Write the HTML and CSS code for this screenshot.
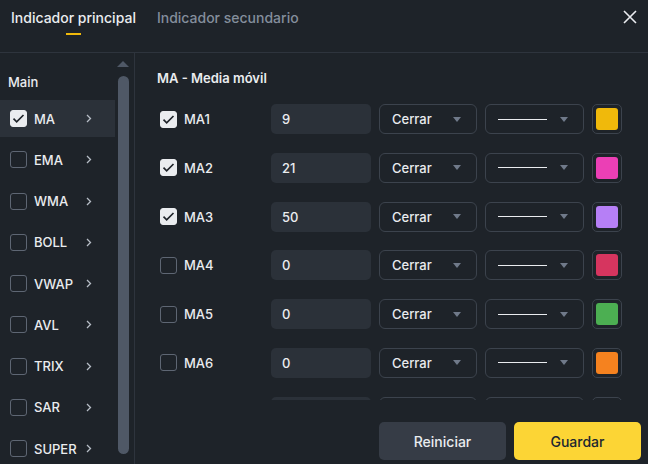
FILE: index.html
```html
<!DOCTYPE html>
<html lang="es">
<head>
<meta charset="utf-8">
<title>Indicadores</title>
<link rel="stylesheet" href="styles.css">
</head>
<body>
<div class="dialog">
  <header class="header">
    <nav class="tabs">
      <div class="tab active"><span>Indicador principal</span><i class="bar"></i></div>
      <div class="tab"><span>Indicador secundario</span><i class="bar"></i></div>
    </nav>
    <svg class="close" width="14" height="14" viewBox="0 0 14 14"><path d="M1 1L13 13M13 1L1 13" stroke="#eaecef" stroke-width="1.6" fill="none"/></svg>
  </header>
  <div class="body">
    <aside class="side">
      <div class="side-title">Main</div>
      <ul class="list">
        <li class="item selected"><span class="cb on"><svg viewBox="0 0 18 18"><path d="M3 9.2l3.8 3.8L15 4.8" stroke="#1e2329" stroke-width="2" fill="none"/></svg></span><span class="name">MA</span><svg class="chev" width="6" height="9" viewBox="0 0 6 9"><path d="M1 1l3.5 3.5L1 8" stroke="#b7bdc6" stroke-width="1.3" fill="none"/></svg></li>
        <li class="item"><span class="cb"></span><span class="name">EMA</span><svg class="chev" width="6" height="9" viewBox="0 0 6 9"><path d="M1 1l3.5 3.5L1 8" stroke="#b7bdc6" stroke-width="1.3" fill="none"/></svg></li>
        <li class="item"><span class="cb"></span><span class="name">WMA</span><svg class="chev" width="6" height="9" viewBox="0 0 6 9"><path d="M1 1l3.5 3.5L1 8" stroke="#b7bdc6" stroke-width="1.3" fill="none"/></svg></li>
        <li class="item"><span class="cb"></span><span class="name">BOLL</span><svg class="chev" width="6" height="9" viewBox="0 0 6 9"><path d="M1 1l3.5 3.5L1 8" stroke="#b7bdc6" stroke-width="1.3" fill="none"/></svg></li>
        <li class="item"><span class="cb"></span><span class="name">VWAP</span><svg class="chev" width="6" height="9" viewBox="0 0 6 9"><path d="M1 1l3.5 3.5L1 8" stroke="#b7bdc6" stroke-width="1.3" fill="none"/></svg></li>
        <li class="item"><span class="cb"></span><span class="name">AVL</span><svg class="chev" width="6" height="9" viewBox="0 0 6 9"><path d="M1 1l3.5 3.5L1 8" stroke="#b7bdc6" stroke-width="1.3" fill="none"/></svg></li>
        <li class="item"><span class="cb"></span><span class="name">TRIX</span><svg class="chev" width="6" height="9" viewBox="0 0 6 9"><path d="M1 1l3.5 3.5L1 8" stroke="#b7bdc6" stroke-width="1.3" fill="none"/></svg></li>
        <li class="item"><span class="cb"></span><span class="name">SAR</span><svg class="chev" width="6" height="9" viewBox="0 0 6 9"><path d="M1 1l3.5 3.5L1 8" stroke="#b7bdc6" stroke-width="1.3" fill="none"/></svg></li>
        <li class="item"><span class="cb"></span><span class="name">SUPER</span><svg class="chev" width="6" height="9" viewBox="0 0 6 9"><path d="M1 1l3.5 3.5L1 8" stroke="#b7bdc6" stroke-width="1.3" fill="none"/></svg></li>
      </ul>
      <div class="scrollbar">
        <svg class="sb-arrow" width="12" height="6" viewBox="0 0 12 6"><path d="M6 0L12 6H0z" fill="#4f5866"/></svg>
        <div class="sb-thumb"></div>
      </div>
    </aside>
    <main class="panel">
      <div class="scroll">
        <div class="panel-title">MA - Media móvil</div>
        <div class="rows">
          <div class="row"><span class="cb on"><svg viewBox="0 0 18 18"><path d="M3 9.2l3.8 3.8L15 4.8" stroke="#1e2329" stroke-width="2" fill="none"/></svg></span><span class="rlabel">MA1</span><div class="input">9</div><div class="select"><span>Cerrar</span><i class="tri"></i></div><div class="select"><i class="line"></i><i class="tri"></i></div><div class="swatch"><i class="c1"></i></div></div>
          <div class="row"><span class="cb on"><svg viewBox="0 0 18 18"><path d="M3 9.2l3.8 3.8L15 4.8" stroke="#1e2329" stroke-width="2" fill="none"/></svg></span><span class="rlabel">MA2</span><div class="input">21</div><div class="select"><span>Cerrar</span><i class="tri"></i></div><div class="select"><i class="line"></i><i class="tri"></i></div><div class="swatch"><i class="c2"></i></div></div>
          <div class="row"><span class="cb on"><svg viewBox="0 0 18 18"><path d="M3 9.2l3.8 3.8L15 4.8" stroke="#1e2329" stroke-width="2" fill="none"/></svg></span><span class="rlabel">MA3</span><div class="input">50</div><div class="select"><span>Cerrar</span><i class="tri"></i></div><div class="select"><i class="line"></i><i class="tri"></i></div><div class="swatch"><i class="c3"></i></div></div>
          <div class="row"><span class="cb"></span><span class="rlabel">MA4</span><div class="input">0</div><div class="select"><span>Cerrar</span><i class="tri"></i></div><div class="select"><i class="line"></i><i class="tri"></i></div><div class="swatch"><i class="c4"></i></div></div>
          <div class="row"><span class="cb"></span><span class="rlabel">MA5</span><div class="input">0</div><div class="select"><span>Cerrar</span><i class="tri"></i></div><div class="select"><i class="line"></i><i class="tri"></i></div><div class="swatch"><i class="c5"></i></div></div>
          <div class="row"><span class="cb"></span><span class="rlabel">MA6</span><div class="input">0</div><div class="select"><span>Cerrar</span><i class="tri"></i></div><div class="select"><i class="line"></i><i class="tri"></i></div><div class="swatch"><i class="c6"></i></div></div>
          <div class="row"><span class="cb"></span><span class="rlabel"></span><div class="input"></div><div class="select"></div><div class="select"></div><div class="swatch"><i class="c7"></i></div></div>
        </div>
      </div>
      <footer class="footer">
        <button class="btn reset">Reiniciar</button>
        <button class="btn save">Guardar</button>
      </footer>
    </main>
  </div>
</div>
</body>
</html>
```

FILE: styles.css
```css
* { box-sizing: border-box; }
html, body { margin: 0; padding: 0; }
body {
  width: 648px;
  height: 464px;
  overflow: hidden;
  background: #1e2329;
  font-family: Inter, "Noto Sans", "Liberation Sans", sans-serif;
  color: #eaecef;
}
.dialog { width: 648px; height: 464px; display: flex; flex-direction: column; }

.header {
  height: 53px;
  flex: none;
  border-bottom: 1px solid #2e343d;
  display: flex;
  align-items: flex-start;
  justify-content: space-between;
  padding: 0 11px 0 11px;
}
.tabs { display: flex; gap: 21px; padding-top: 8px; }
.tab {
  display: flex;
  flex-direction: column;
  align-items: center;
  font-size: 14px;
  font-weight: 500;
  line-height: 20px;
  color: #848e9c;
}
.tab.active { color: #eaecef; }
.tab .bar { display: block; width: 15px; height: 2px; margin-top: 5px; background: transparent; }
.tab.active .bar { background: #f0b90b; }
.close { margin-top: 10px; margin-right: 0; }

.body { flex: 1; display: flex; min-height: 0; }

.side {
  width: 135px;
  flex: none;
  border-right: 1px solid #2e343d;
  position: relative;
  overflow: hidden;
}
.side-title {
  padding: 19px 0 0 8px;
  font-size: 13px;
  font-weight: 500;
  line-height: 20px;
  color: #eaecef;
}
.list { list-style: none; margin: 8px 0 0 0; padding: 0; }
.item {
  width: 115px;
  height: 37px;
  margin-bottom: 4.25px;
  display: flex;
  align-items: center;
  padding-left: 10px;
  font-size: 13px;
  font-weight: 500;
  color: #eaecef;
}
.item.selected { background: #2b3139; }
.item .name { width: 52px; margin-left: 7px; }
.chev { display: block; }

.cb {
  width: 17px;
  height: 17px;
  flex: none;
  border: 1px solid #5e6673;
  border-radius: 3px;
  display: block;
}
.cb.on { background: #eaecef; border-color: #eaecef; }
.cb svg { display: block; width: 15px; height: 15px; }

.scrollbar {
  position: absolute;
  left: 117px;
  top: 8px;
  width: 12px;
  display: flex;
  flex-direction: column;
  align-items: center;
}
.sb-arrow { display: block; }
.sb-thumb {
  margin-top: 9px;
  width: 11px;
  height: 378px;
  border-radius: 6px;
  background: #4f5866;
}

.panel { flex: 1; display: flex; flex-direction: column; min-width: 0; }
.scroll { height: 347px; overflow: hidden; padding: 15px 0 0 22px; flex: none; }
.panel-title { font-size: 13px; font-weight: 600; line-height: 20px; color: #eaecef; }
.rows { margin-top: 16px; display: flex; flex-direction: column; gap: 18.8px; padding-left: 3px; }
.row {
  display: grid;
  grid-template-columns: 17px 78px 100px 98px 99px 30px;
  column-gap: 8px;
  height: 30px;
  align-items: center;
  font-size: 13px;
  font-weight: 500;
}
.rlabel { color: #eaecef; margin-left: -1px; }
.input {
  height: 30px;
  background: #2b3139;
  border-radius: 5px;
  padding-left: 11px;
  line-height: 30px;
  color: #eaecef;
}
.select {
  height: 30px;
  border: 1px solid #3c434d;
  border-radius: 6px;
  display: flex;
  align-items: center;
  justify-content: space-between;
  padding: 0 15px 0 12px;
  color: #eaecef;
}
.tri {
  display: block;
  width: 0; height: 0;
  border-left: 4.5px solid transparent;
  border-right: 4.5px solid transparent;
  border-top: 5px solid #707a8a;
}
.line { display: block; width: 49px; height: 1px; background: #eaecef; }
.swatch {
  width: 30px;
  height: 30px;
  border: 1px solid #3c434d;
  border-radius: 5px;
  padding: 3px;
}
.swatch i { display: block; width: 22px; height: 22px; border-radius: 3px; }
.c1 { background: #f0b90b; }
.c2 { background: #eb3fb5; }
.c3 { background: #b67ff6; }
.c4 { background: #d6355f; }
.c5 { background: #4caf52; }
.c6 { background: #f5821f; }
.c7 { background: #2b3139; }

.footer {
  flex: 1;
  display: flex;
  justify-content: flex-end;
  gap: 8px;
  padding: 22px 7px 0 0;
}
.btn {
  width: 127px;
  height: 38px;
  border: none;
  border-radius: 5px;
  font-family: inherit;
  font-size: 14px;
  font-weight: 500;
}
.reset { background: #363c46; color: #eaecef; }
.save { background: #fcd535; color: #202630; }
```
